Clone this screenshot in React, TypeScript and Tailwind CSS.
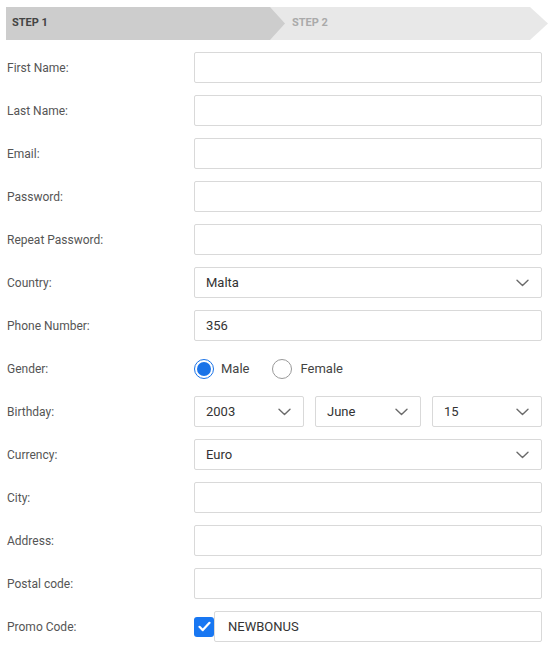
import { ReactNode } from "react";

const Chevron = () => (
  <svg width="13" height="8" viewBox="0 0 13 8" fill="none">
    <path d="M1 1.2l5.5 5.3 5.5-5.3" stroke="#6b6b6b" strokeWidth="1.4" strokeLinecap="round" strokeLinejoin="round" />
  </svg>
);

const Box = ({ children, className = "" }: { children?: ReactNode; className?: string }) => (
  <div
    className={
      "h-[31px] border border-[#d9d9d9] rounded-[2px] bg-white flex items-center text-[13px] text-[#333] " +
      className
    }
  >
    {children}
  </div>
);

const Select = ({ value }: { value: string }) => (
  <Box className="justify-between pl-[11px] pr-[12px]">
    <span>{value}</span>
    <Chevron />
  </Box>
);

const Row = ({ label, children }: { label: string; children?: ReactNode }) => (
  <div className="flex items-center h-[31px]">
    <div className="w-[188px] pl-[1px] text-[12px] text-[#555]">{label}</div>
    <div className="w-[348px]">{children}</div>
  </div>
);

export default function App() {
  const plain = ["First Name:", "Last Name:", "Email:", "Password:", "Repeat Password:"];

  return (
    <div className="w-[554px] h-[653px] bg-white px-[6px] pt-[7px] font-['Roboto',sans-serif]">
      <div className="flex h-[33px] w-[542px]">
        <div className="relative z-10 w-[279px] shrink-0 bg-[#cdcdcd] flex items-center pl-[6px] text-[11px] font-bold text-[#444] [clip-path:polygon(0_0,264px_0,100%_50%,264px_100%,0_100%)]">
          STEP 1
        </div>
        <div className="-ml-[15px] flex-1 bg-[#e8e8e8] flex items-center pl-[22px] text-[11px] font-bold text-[#aaa] [clip-path:polygon(0_0,calc(100%-18px)_0,100%_50%,calc(100%-18px)_100%,0_100%)]">
          STEP 2
        </div>
      </div>

      <div className="mt-[12px] flex flex-col gap-[12px]">
        {plain.map((l) => (
          <Row key={l} label={l}>
            <Box />
          </Row>
        ))}
        <Row label="Country:">
          <Select value="Malta" />
        </Row>
        <Row label="Phone Number:">
          <Box className="pl-[11px]">356</Box>
        </Row>
        <Row label="Gender:">
          <div className="flex items-center text-[13px] text-[#444]">
            <span className="w-[20px] h-[20px] rounded-full border border-[#1a73e8] flex items-center justify-center">
              <span className="w-[14px] h-[14px] rounded-full bg-[#1a73e8]" />
            </span>
            <span className="ml-[7px]">Male</span>
            <span className="ml-[23px] w-[20px] h-[20px] rounded-full border border-[#999]" />
            <span className="ml-[8px]">Female</span>
          </div>
        </Row>
        <Row label="Birthday:">
          <div className="grid grid-cols-[110px_106px_110px] gap-[11px]">
            <Select value="2003" />
            <Select value="June" />
            <Select value="15" />
          </div>
        </Row>
        <Row label="Currency:">
          <Select value="Euro" />
        </Row>
        {["City:", "Address:", "Postal code:"].map((l) => (
          <Row key={l} label={l}>
            <Box />
          </Row>
        ))}
        <Row label="Promo Code:">
          <div className="flex items-center">
            <span className="w-[20px] h-[20px] shrink-0 rounded-[3px] bg-[#1877f2] flex items-center justify-center">
              <svg width="13" height="11" viewBox="0 0 13 11" fill="none">
                <path d="M1.5 5.8l3.3 3.3L11.5 1.8" stroke="#fff" strokeWidth="2.2" strokeLinecap="round" strokeLinejoin="round" />
              </svg>
            </span>
            <Box className="flex-1 pl-[13px]">NEWBONUS</Box>
          </div>
        </Row>
      </div>
    </div>
  );
}
